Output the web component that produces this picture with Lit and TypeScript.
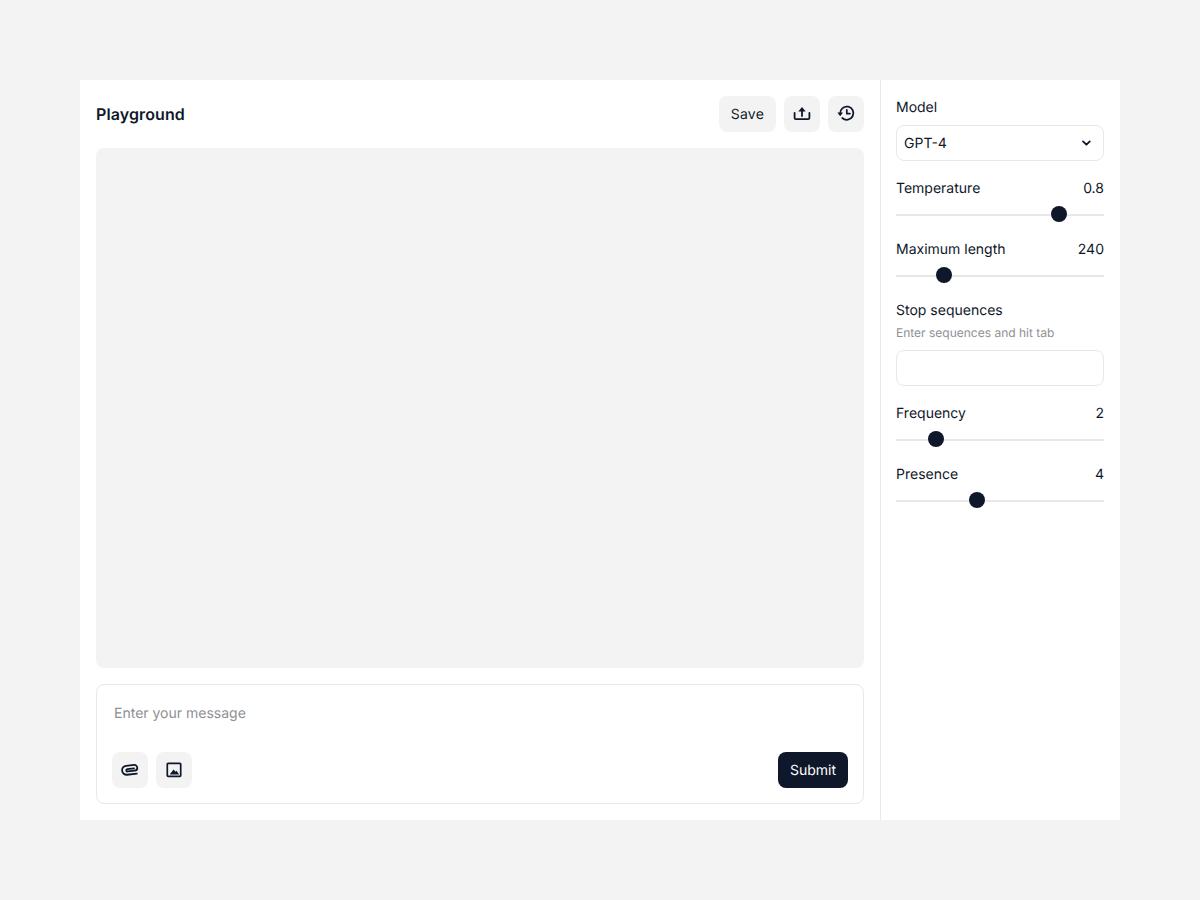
import { LitElement, html, css, svg } from "lit";
import { customElement } from "lit/decorators.js";

const icon = (body: unknown, size = 20) =>
  html`<svg width=${size} height=${size} viewBox="0 0 ${size} ${size}" fill="none">${body}</svg>`;

const upload = svg`<path d="M2.6 8.8v5.2a1.2 1.2 0 0 0 1.2 1.2h12.4a1.2 1.2 0 0 0 1.2-1.2V8.8" stroke="currentColor" stroke-width="1.8" stroke-linecap="round"/><path d="M10 7v5" stroke="currentColor" stroke-width="1.8" stroke-linecap="round"/><path d="M10 3l3.7 4.4H6.3z" fill="currentColor"/>`;
const history = svg`<path d="M4.2 9.4a6.6 6.6 0 1 1 2.1 4.6" stroke="currentColor" stroke-width="1.8" stroke-linecap="round"/><path d="M1.4 8.6h5.6L4.2 12.2z" fill="currentColor"/><path d="M10.8 5.8v3.9h3.1" stroke="currentColor" stroke-width="1.7" stroke-linecap="round" stroke-linejoin="round"/>`;
const clip = svg`<g transform="rotate(-6 10 10)"><path d="M16.4 14.4H6.6a4.5 4.5 0 0 1 0-9h8a2.9 2.9 0 0 1 0 5.8H7.4a1.2 1.2 0 0 1 0-2.4h6.8" stroke="currentColor" stroke-width="1.8" stroke-linecap="round" stroke-linejoin="round"/></g>`;
const image = svg`<rect x="3.3" y="3.3" width="13.4" height="13" rx="0.8" stroke="currentColor" stroke-width="1.7"/><path d="M5.6 14.6 9.6 9.4l2 2.4 1-1 2.6 3.8z" fill="currentColor"/>`;
const chevron = svg`<path d="M5 6.4l3.4 3.3 3.4-3.3" stroke="currentColor" stroke-width="1.8" stroke-linecap="round" stroke-linejoin="round"/>`;

@customElement("app-root")
export class AppRoot extends LitElement {
  static styles = css`
    :host {
      display: block;
      min-height: 900px;
      box-sizing: border-box;
      padding: 80px;
      background: #f3f3f3;
      font-family: Inter, "Liberation Sans", sans-serif;
      font-size: 14px;
      line-height: 21px;
      color: #0f172a;
      text-rendering: geometricPrecision;
    }
    * { box-sizing: border-box; }
    .shell {
      display: flex;
      height: 740px;
      background: #fff;
    }
    .main {
      flex: 1;
      min-width: 0;
      display: flex;
      flex-direction: column;
      gap: 16px;
      padding: 16px;
    }
    .header {
      display: flex;
      align-items: center;
      justify-content: space-between;
    }
    .title {
      font-size: 16px;
      font-weight: 600;
      line-height: 24px;
      letter-spacing: 0.1px;
    }
    .actions, .tools {
      display: flex;
      gap: 8px;
    }
    .btn {
      display: flex;
      align-items: center;
      justify-content: center;
      height: 36px;
      min-width: 36px;
      border-radius: 8px;
      background: #f3f3f3;
    }
    .btn.text {
      padding: 0 12px;
      letter-spacing: 0.2px;
    }
    .canvas {
      flex: 1;
      border-radius: 8px;
      background: #f3f3f3;
    }
    .composer {
      height: 120px;
      border: 1px solid #e8e8e8;
      border-radius: 8px;
      padding: 18px 15px 15px;
      display: flex;
      flex-direction: column;
      justify-content: space-between;
    }
    .placeholder {
      padding-left: 2px;
      color: #8f8f94;
    }
    .composer-foot {
      display: flex;
      justify-content: space-between;
    }
    .submit {
      background: #0f172a;
      color: #fff;
      padding: 0 12px;
    }
    .side {
      width: 240px;
      border-left: 1px solid #e8e8e8;
      padding: 16px 16px 16px 15px;
      display: flex;
      flex-direction: column;
      gap: 16px;
    }
    .field {
      display: flex;
      flex-direction: column;
      gap: 8px;
    }
    .stack {
      display: flex;
      flex-direction: column;
      gap: 4px;
    }
    .row {
      display: flex;
      justify-content: space-between;
      padding-top: 1px;
      margin-bottom: -1px;
    }
    .hint {
      font-size: 12px;
      line-height: 18px;
      color: #8f8f94;
    }
    .box {
      height: 36px;
      border: 1px solid #e8e8e8;
      border-radius: 8px;
    }
    .select {
      display: flex;
      align-items: center;
      justify-content: space-between;
      padding: 0 9px 0 7px;
    }
    .slider {
      position: relative;
      height: 16px;
      display: flex;
      align-items: center;
    }
    .track {
      flex: 1;
      height: 2px;
      margin-top: 2px;
      background: #e8e8e8;
    }
    .thumb {
      position: absolute;
      top: 0;
      width: 16px;
      height: 16px;
      border-radius: 50%;
      background: #0f172a;
    }
  `;

  private slider(label: string, value: string, offset: number) {
    return html`<div class="field">
      <div class="row"><span>${label}</span><span>${value}</span></div>
      <div class="slider">
        <div class="track"></div>
        <div class="thumb" style="left:${offset}px"></div>
      </div>
    </div>`;
  }

  render() {
    return html`<div class="shell">
      <div class="main">
        <div class="header">
          <div class="title">Playground</div>
          <div class="actions">
            <div class="btn text">Save</div>
            <div class="btn">${icon(upload)}</div>
            <div class="btn">${icon(history)}</div>
          </div>
        </div>
        <div class="canvas"></div>
        <div class="composer">
          <div class="placeholder">Enter your message</div>
          <div class="composer-foot">
            <div class="tools">
              <div class="btn">${icon(clip)}</div>
              <div class="btn">${icon(image)}</div>
            </div>
            <div class="btn submit">Submit</div>
          </div>
        </div>
      </div>
      <div class="side">
        <div class="field">
          <div class="row"><span>Model</span></div>
          <div class="box select"><span>GPT-4</span>${icon(chevron, 16)}</div>
        </div>
        ${this.slider("Temperature", "0.8", 155)}
        ${this.slider("Maximum length", "240", 40)}
        <div class="field">
          <div class="stack">
            <div class="row"><span>Stop sequences</span></div>
            <div class="hint">Enter sequences and hit tab</div>
          </div>
          <div class="box"></div>
        </div>
        ${this.slider("Frequency", "2", 31.5)}
        ${this.slider("Presence", "4", 73)}
      </div>
    </div>`;
  }
}
